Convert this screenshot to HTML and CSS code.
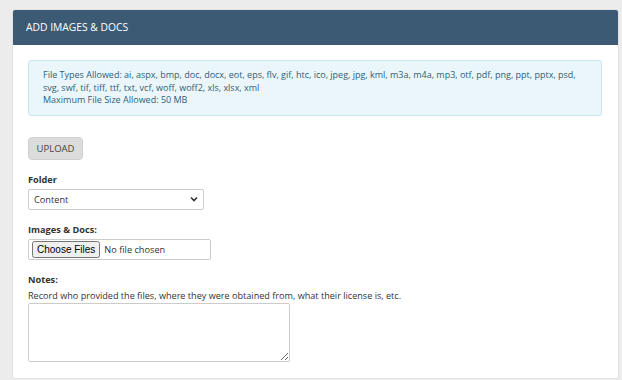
FILE: index.html
```html
<!DOCTYPE html>
<html lang="en">

<head>
    <meta charset="UTF-8" />
    <title>Add Images &amp; Docs</title>
    <link rel="stylesheet" href="styles.css">
</head>

<body>
    <div class="panel">
        <div class="panel-heading">ADD IMAGES &amp; DOCS</div>

        <div class="panel-body">
            <div class="alerta">
                File Types Allowed: ai, aspx, bmp, doc, docx, eot, eps, flv, gif, htc, ico, jpeg, jpg, kml, m3a, m4a, mp3, otf, pdf, png, ppt, pptx, psd, svg, swf, tif, tiff, ttf, txt, vcf, woff, woff2, xls, xlsx, xml<br>
                Maximum File Size Allowed: 50 MB
            </div>

            <button class="btn-upload">UPLOAD</button>

            <div class="campo">
                <label for="folder">Folder</label>
                <select id="folder">
                    <option>Content</option>
                </select>
            </div>

            <div class="campo">
                <label for="archivos">Images &amp; Docs:</label>
                <div class="file-box">
                    <input type="file" id="archivos" multiple>
                </div>
            </div>

            <div class="campo">
                <label for="notas">Notes:</label>
                <p class="ayuda">Record who provided the files, where they were obtained from, what their license is, etc.</p>
                <textarea id="notas"></textarea>
            </div>
        </div>
    </div>
</body>

</html>
```

FILE: styles.css
```css
html,
body {
    margin: 0;
    padding: 0;
    background: #ececec;
    font-family: 'Open Sans', sans-serif;
    color: #333;
    overflow: hidden;
}

body {
    padding: 9px 3px 0 12px;
}

.panel {
    background: #fff;
    border: 1px solid #e2e2e2;
    border-radius: 3px;
    height: 370px;
    box-sizing: border-box;
}

.panel-heading {
    background: #3d5a74;
    color: #fff;
    font-size: 10.3px;
    height: 35px;
    line-height: 35px;
    padding: 0 13px;
    border-radius: 2px 2px 0 0;
}

.panel-body {
    padding: 15px 16px 0 15px;
}

.alerta {
    background: #eaf6f9;
    border: 1px solid #c9e6ee;
    border-radius: 3px;
    color: #31607a;
    font-size: 9px;
    line-height: 12.6px;
    padding: 8px 10px 8px 14px;
}

.btn-upload {
    display: block;
    margin: 21px 0 0;
    background: #dcdcdc;
    border: 1px solid #d0d0d0;
    border-radius: 4px;
    color: #444;
    font-family: 'Open Sans', sans-serif;
    font-size: 9.5px;
    width: 55px;
    height: 23px;
    padding: 0;
}

.campo {
    margin: 14px 0 0;
}

.campo label {
    display: block;
    font-size: 9.2px;
    line-height: 12px;
    font-weight: bold;
    color: #333;
    margin-bottom: 3px;
}

select {
    display: block;
    width: 176px;
    height: 21px;
    font-family: 'Open Sans', sans-serif;
    font-size: 9.2px;
    color: #333;
    border: 1px solid #ccc;
    border-radius: 2px;
    padding: 0 5px;
    appearance: none;
    background: #fff url("data:image/svg+xml,%3Csvg xmlns='http://www.w3.org/2000/svg' width='8' height='6' viewBox='0 0 8 6'%3E%3Cpath d='M1 1.5l3 3 3-3' fill='none' stroke='%23333' stroke-width='1.6'/%3E%3C/svg%3E") no-repeat right 5px center;
}

.file-box {
    width: 183px;
    height: 21px;
    border: 1px solid #ccc;
    border-radius: 2px;
    box-sizing: border-box;
    display: flex;
    align-items: center;
    padding-left: 3px;
}

.file-box input {
    font-family: 'Open Sans', sans-serif;
    font-size: 9.2px;
    color: #333;
}

.file-box input::file-selector-button {
    font-family: 'Liberation Sans', sans-serif;
    font-size: 10px;
    padding: 1px 3px;
    margin-right: 4px;
}

.ayuda {
    margin: 0;
    font-size: 9.1px;
    line-height: 14px;
    color: #333;
}

textarea {
    display: block;
    width: 262px;
    height: 59px;
    box-sizing: border-box;
    border: 1px solid #ccc;
    border-radius: 2px;
}
```
